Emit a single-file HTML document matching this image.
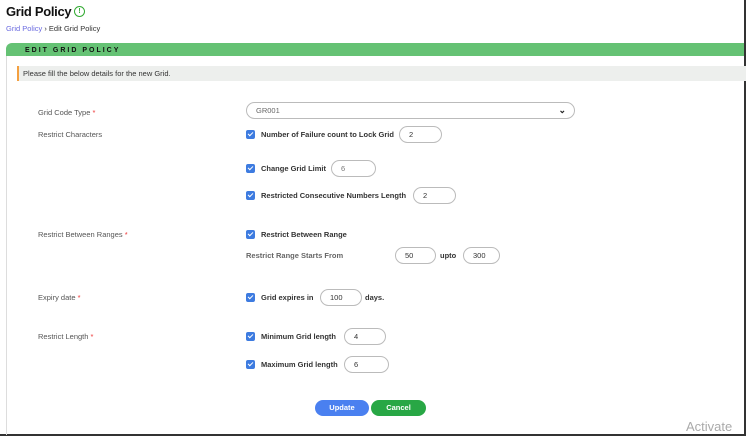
<!DOCTYPE html><html><head><style>
body{margin:0;width:746px;height:436px;background:#fff;font-family:"Liberation Sans",sans-serif;position:relative;overflow:hidden;color:#333}
.a{position:absolute;white-space:nowrap}
.l{font-size:7.5px;color:#555}
.cb{position:absolute;width:9px;height:9px;background:#3d7be0;border-radius:2px}
.cb:after{content:"";position:absolute;left:3px;top:1px;width:2px;height:4px;border:solid #fff;border-width:0 1.3px 1.3px 0;transform:rotate(45deg)}
.t{font-size:7.5px;color:#333;font-weight:bold}
.in{position:absolute;border:1px solid #bbb;border-radius:9px;height:15px;font-size:7.5px;line-height:15px;padding-left:9px;box-sizing:content-box;color:#333}
.r{color:#e33}
</style></head><body>
<div class="a" style="left:0;top:0;width:744px;height:434px;border-right:2px solid #333;border-bottom:2px solid #333"></div>
<div class="a" style="left:6px;top:4px;font-size:13px;letter-spacing:-0.3px;font-weight:bold;color:#111">Grid Policy</div>
<div class="a" style="left:74px;top:6px;width:9px;height:9px;border:1.3px solid #3a3;border-radius:50%;font-size:7px;color:#3a3;text-align:center;line-height:9px;font-weight:bold">!</div>
<div class="a" style="left:6px;top:24px;font-size:7.5px"><span style="color:#6a6ae0">Grid Policy</span> › Edit Grid Policy</div>
<div class="a" style="left:6px;top:43px;width:738px;height:392px;border-left:1px solid #ddd;border-top-left-radius:6px"></div>
<div class="a" style="left:6px;top:43px;width:738px;height:13px;background:#65c274;border-top-left-radius:6px"></div>
<div class="a" style="left:25px;top:47px;font-size:7px;line-height:8px;font-weight:bold;letter-spacing:2px;color:#111">EDIT GRID POLICY</div>
<div class="a" style="left:17px;top:66px;width:727px;height:15px;background:#edefed;border-left:2px solid #f4a040"></div>
<div class="a" style="left:23px;top:69px;font-size:7.5px;color:#333">Please fill the below details for the new Grid.</div>
<div class="a l" style="left:38px;top:108px">Grid Code Type <span class="r">*</span></div>
<div class="a l" style="left:38px;top:130px">Restrict Characters</div>
<div class="a l" style="left:38px;top:230px">Restrict Between Ranges <span class="r">*</span></div>
<div class="a l" style="left:38px;top:293px">Expiry date <span class="r">*</span></div>
<div class="a l" style="left:38px;top:332px">Restrict Length <span class="r">*</span></div>
<div class="in" style="left:246px;top:102px;width:318px;color:#666">GR001<span style="position:absolute;right:8px;top:0;font-size:9px;font-weight:bold;color:#222">⌄</span></div>
<div class="cb" style="left:246px;top:130px"></div><div class="a t" style="left:261px;top:130px">Number of Failure count to Lock Grid</div><div class="in" style="left:399px;top:126px;width:32px">2</div>
<div class="cb" style="left:246px;top:164px"></div><div class="a t" style="left:261px;top:164px">Change Grid Limit</div><div class="in" style="left:331px;top:160px;width:34px;color:#777">6</div>
<div class="cb" style="left:246px;top:191px"></div><div class="a t" style="left:261px;top:191px">Restricted Consecutive Numbers Length</div><div class="in" style="left:413px;top:187px;width:32px">2</div>
<div class="cb" style="left:246px;top:230px"></div><div class="a t" style="left:261px;top:230px">Restrict Between Range</div>
<div class="a l" style="left:246px;top:251px;font-weight:bold;color:#666">Restrict Range Starts From</div>
<div class="in" style="left:395px;top:247px;width:30px">50</div>
<div class="a t" style="left:440px;top:251px">upto</div>
<div class="in" style="left:463px;top:247px;width:26px">300</div>
<div class="cb" style="left:246px;top:293px"></div><div class="a t" style="left:261px;top:293px">Grid expires in</div><div class="in" style="left:320px;top:289px;width:31px">100</div><div class="a t" style="left:365px;top:293px">days.</div>
<div class="cb" style="left:246px;top:332px"></div><div class="a t" style="left:261px;top:332px">Minimum Grid length</div><div class="in" style="left:344px;top:328px;width:31px">4</div>
<div class="cb" style="left:246px;top:360px"></div><div class="a t" style="left:261px;top:360px">Maximum Grid length</div><div class="in" style="left:344px;top:356px;width:34px">6</div>
<div class="a" style="left:315px;top:400px;width:54px;height:16px;background:#4a80f0;border-radius:8px;color:#fff;font-size:7.5px;font-weight:bold;text-align:center;line-height:16px">Update</div>
<div class="a" style="left:371px;top:400px;width:55px;height:16px;background:#28a745;border-radius:8px;color:#fff;font-size:7.5px;font-weight:bold;text-align:center;line-height:16px">Cancel</div>
<div class="a" style="left:686px;top:419px;font-size:13px;color:#aaa">Activate</div>
</body></html>
